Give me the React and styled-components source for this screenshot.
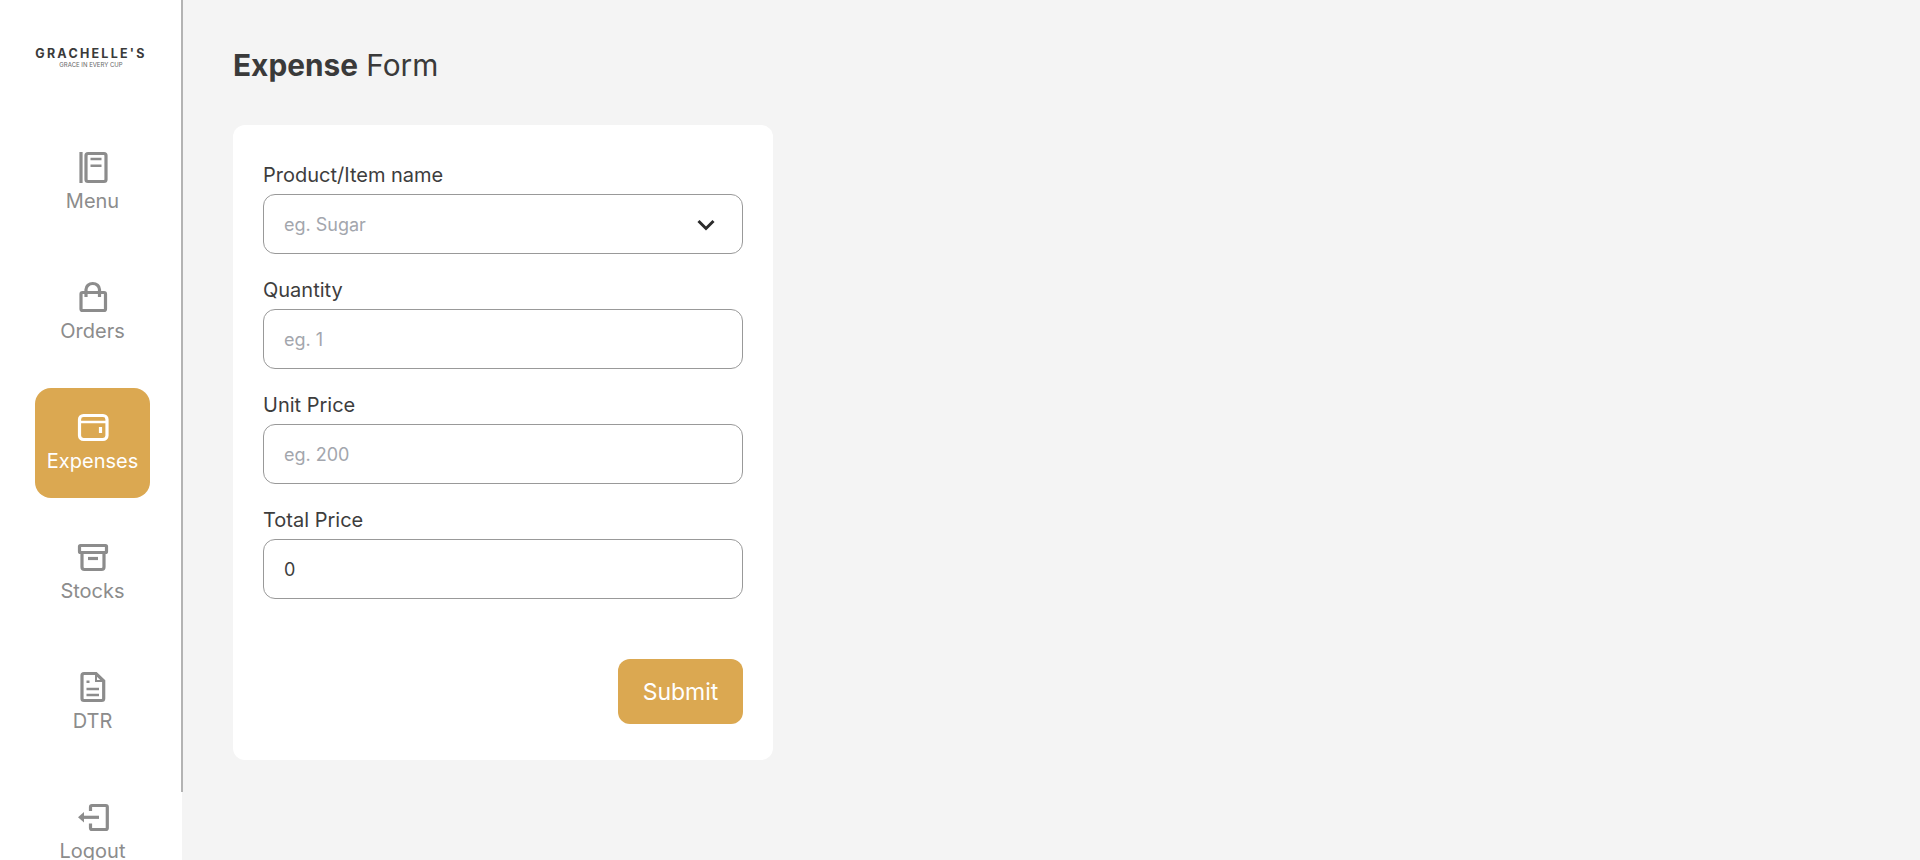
import React from 'react';
import styled, { createGlobalStyle } from 'styled-components';

const GlobalStyle = createGlobalStyle`
  html, body {
    margin: 0;
    height: 100%;
    overflow: hidden;
    background: #f4f4f4;
    font-family: Inter, "Liberation Sans", sans-serif;
  }
  * { box-sizing: border-box; }
`;

const Page = styled.div`
  display: flex;
  height: 860px;
  overflow: hidden;
`;

const Sidebar = styled.aside`
  width: 182px;
  flex-shrink: 0;
  height: 860px;
  background: #fff;
`;

const Rail = styled.div`
  width: 183px;
  height: 792px;
  border-right: 2px solid #b3b3b3;
  padding: 47px 0 0 4px;
`;

const Logo = styled.div`
  display: flex;
  flex-direction: column;
  align-items: center;
  height: 81px;
  margin-right: 3px;
  color: #3a3a3a;
`;

const LogoName = styled.div`
  font-size: 12.5px;
  line-height: 13px;
  font-weight: 700;
  letter-spacing: 2.25px;
  white-space: nowrap;
`;

const LogoTag = styled.div`
  margin-top: 1px;
  font-size: 6px;
  line-height: 7px;
  color: #666;
  white-space: nowrap;
`;

const NavList = styled.nav`
  display: flex;
  flex-direction: column;
  align-items: center;
  gap: 20px;
`;

const NavItem = styled.a`
  display: flex;
  flex-direction: column;
  align-items: center;
  gap: 4px;
  width: 115px;
  height: 110px;
  padding-top: 21px;
  border-radius: 16px;
  font-size: 20px;
  line-height: 24px;
  background: ${({ $active }) => ($active ? '#dba851' : 'transparent')};
  color: ${({ $active }) => ($active ? '#fff' : '#8c8c8c')};
`;

const Icon = styled.svg`
  flex-shrink: 0;
  width: 36px;
  height: 36px;
  fill: none;
  stroke: currentColor;
  stroke-width: 3.2;
`;

const Main = styled.main`
  flex: 1;
  padding: 46px 0 0 51px;
`;

const Title = styled.h1`
  margin: 0 0 40px;
  font-size: 29.800px;
  line-height: 39px;
  font-weight: 400;
  color: #3a3a3a;

  b { font-weight: 700; }
`;

const Card = styled.form`
  width: 540px;
  height: 635px;
  padding: 38px 30px 0;
  background: #fff;
  border-radius: 12px;
`;

const Field = styled.div`
  display: flex;
  flex-direction: column;
  gap: 7px;
  height: 115px;
`;

const Label = styled.label`
  font-size: 20px;
  line-height: 24px;
  color: #3d3d3d;
`;

const InputBox = styled.div`
  display: flex;
  align-items: center;
  justify-content: space-between;
  height: 60px;
  padding: 1px 27px 0 20px;
  border: 1px solid #999;
  border-radius: 12px;
  font-size: 18px;
  color: ${({ $filled }) => ($filled ? '#3d3d3d' : '#a3a6ad')};
`;

const Chevron = styled.svg`
  width: 18px;
  height: 12px;
  margin-left: -2px;
  fill: none;
  stroke: #2b2b2b;
  stroke-width: 3;
`;

const Actions = styled.div`
  display: flex;
  justify-content: flex-end;
  margin-top: 36px;
`;

const Submit = styled.button`
  width: 125px;
  height: 65px;
  border: 0;
  border-radius: 12px;
  background: #dba851;
  color: #fff;
  font-family: inherit;
  font-size: 23px;
`;

const icons = {
  menu: (
    <>
      <path d="M6 3v31" />
      <rect x="11" y="4.500" width="20" height="28" rx="2" />
      <path d="M15.500 10h11M15.500 16.700h11" strokeWidth="2.400" />
    </>
  ),
  orders: (
    <>
      <rect x="6" y="13.500" width="24.500" height="18" rx="1.500" />
      <path d="M11 18V10.500a6.750 6 0 0 1 13.500 0V18" />
    </>
  ),
  expenses: (
    <>
      <rect x="4.500" y="6.500" width="27.500" height="24" rx="4" />
      <path d="M5 13h26" strokeWidth="2.500" />
      <path d="M25.500 18v6" />
    </>
  ),
  stocks: (
    <>
      <rect x="4.500" y="6.500" width="27" height="7" rx="1" />
      <path d="M7 13.500V28a2.500 2.500 0 0 0 2.500 2.500h17A2.500 2.500 0 0 0 29 28V13.500" />
      <path d="M13 19.500h10" />
    </>
  ),
  dtr: (
    <>
      <path d="M9 4.500h12l7.700 7.500V29.500a2 2 0 0 1-2 2H9a2 2 0 0 1-2-2V6.500a2 2 0 0 1 2-2z" />
      <path d="M21 5v7h7" strokeWidth="2" />
      <path d="M11.500 12.700h3M11.500 20h12.500M11.500 26h12.500" strokeWidth="2.400" />
    </>
  ),
  logout: (
    <>
      <path d="M15.500 12V8a1.500 1.500 0 0 1 1.500-1.500h13.800a1.500 1.500 0 0 1 1.500 1.500v21a1.500 1.500 0 0 1-1.500 1.500H17a1.500 1.500 0 0 1-1.500-1.500v-4.500" />
      <path d="M8 18.300h16" />
      <path d="M9 13l-6 5.300 6 5.300z" fill="currentColor" stroke="none" />
    </>
  ),
};

const navItems = [
  { key: 'menu', label: 'Menu' },
  { key: 'orders', label: 'Orders' },
  { key: 'expenses', label: 'Expenses', active: true },
  { key: 'stocks', label: 'Stocks' },
  { key: 'dtr', label: 'DTR' },
  { key: 'logout', label: 'Logout' },
];

const fields = [
  { label: 'Product/Item name', value: 'eg. Sugar', select: true },
  { label: 'Quantity', value: 'eg. 1' },
  { label: 'Unit Price', value: 'eg. 200' },
  { label: 'Total Price', value: '0', filled: true },
];

const App = () => (
  <Page>
    <GlobalStyle />
    <Sidebar>
      <Rail>
        <Logo>
          <LogoName>GRACHELLE'S</LogoName>
          <LogoTag>GRACE IN EVERY CUP</LogoTag>
        </Logo>
        <NavList>
          {navItems.map((item) => (
            <NavItem key={item.key} $active={item.active}>
              <Icon viewBox="0 0 36 36">{icons[item.key]}</Icon>
              {item.label}
            </NavItem>
          ))}
        </NavList>
      </Rail>
    </Sidebar>
    <Main>
      <Title>
        <b>Expense</b> Form
      </Title>
      <Card>
        {fields.map((field) => (
          <Field key={field.label}>
            <Label>{field.label}</Label>
            <InputBox $filled={field.filled}>
              {field.value}
              {field.select && (
                <Chevron viewBox="0 0 18 12">
                  <path d="M1.500 2l7.500 7.500L16.500 2" />
                </Chevron>
              )}
            </InputBox>
          </Field>
        ))}
        <Actions>
          <Submit type="button">Submit</Submit>
        </Actions>
      </Card>
    </Main>
  </Page>
);

export default App;
